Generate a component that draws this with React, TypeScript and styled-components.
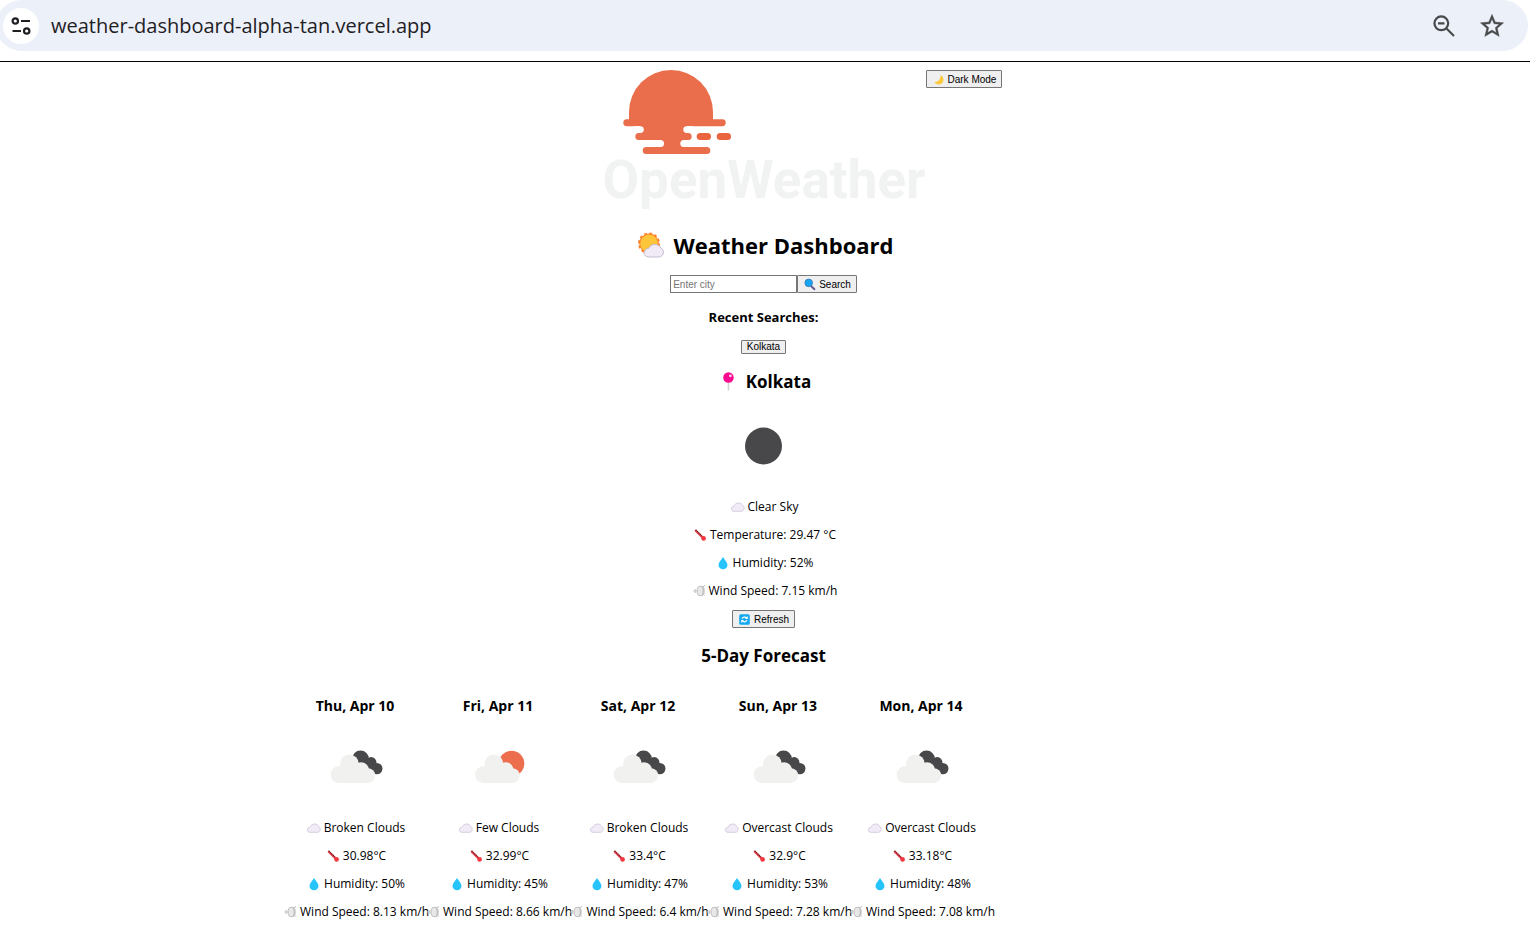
import React from "react";
import styled, { createGlobalStyle } from "styled-components";

const GlobalStyle = createGlobalStyle`
  *, *::before, *::after { box-sizing: border-box; }
  body {
    margin: 0;
    background: #fff;
    color: #000;
    font-family: "Open Sans", "Noto Sans", sans-serif;
    font-size: 12px;
    line-height: 16px;
    overflow-x: hidden;
  }
  h1, h2, h3, p { margin: 0; }
`;

const BrowserBar = styled.header`
  padding-bottom: 10px;
  border-bottom: 1px solid #000;
`;

const AddressBar = styled.div`
  display: flex;
  align-items: center;
  height: 51px;
  margin: 0 2px 0 -4px;
  padding: 0 18px 0 7px;
  border-radius: 26px;
  background: #ecf0f9;
`;

const IconButton = styled.button<{ $filled?: boolean }>`
  display: grid;
  place-items: center;
  flex: none;
  width: 36px;
  height: 36px;
  padding: 0;
  border: 0;
  border-radius: 50%;
  background: ${(p) => (p.$filled ? "#fff" : "transparent")};
`;

const Url = styled.input`
  flex: 1;
  min-width: 0;
  margin-left: 12px;
  padding: 0;
  border: 0;
  outline: 0;
  background: transparent;
  color: #1f2024;
  font-family: "Open Sans", "Noto Sans", sans-serif;
  font-size: 20px;
  line-height: 28px;
`;

const BarActions = styled.div`
  display: flex;
  gap: 12px;
`;

const Page = styled.main`
  display: flex;
  flex-direction: column;
  align-items: center;
  padding: 8px 3px 16px 0;
`;

const TopRow = styled.div`
  display: grid;
  grid-template-columns: 1fr auto 1fr;
  align-items: start;
  width: 100%;
`;

const Logo = styled.svg`
  grid-column: 2;
  display: block;
  width: 324px;
  height: 140px;
`;

const Button = styled.button<{ $compact?: boolean }>`
  display: inline-flex;
  align-items: center;
  justify-self: start;
  gap: 3px;
  height: ${(p) => (p.$compact ? 14 : 18)}px;
  padding: ${(p) => (p.$compact ? "0 5px" : "1px 5px 0")};
  border: 1px solid #767676;
  border-radius: 1px;
  background: #efefef;
  color: #000;
  font-family: "Liberation Sans", Arial, sans-serif;
  font-size: 10px;
  line-height: 12px;
  white-space: nowrap;
`;

const Title = styled.h1`
  display: flex;
  align-items: center;
  gap: 8px;
  margin-top: 19px;
  font-size: 22px;
  line-height: 32px;
`;

const SearchForm = styled.form`
  display: flex;
  margin-top: 14px;
`;

const CityInput = styled.input`
  width: 127px;
  height: 18px;
  padding: 0 2px;
  border: 1px solid #767676;
  border-radius: 0;
  background: #fff;
  font-family: "Liberation Sans", Arial, sans-serif;
  font-size: 10px;
  &::placeholder { color: #757575; }
`;

const SmallHeading = styled.h3`
  margin: 15px 0 14px;
  font-size: 13px;
  line-height: 18px;
`;

const SectionHeading = styled.h2`
  display: flex;
  align-items: center;
  gap: 6px;
  margin-top: 16px;
  font-size: 17px;
  line-height: 24px;
`;

const WeatherIcon = styled.svg`
  display: block;
  width: 75px;
  height: 75px;
  margin: 15px 0;
`;

const Facts = styled.div`
  display: flex;
  flex-direction: column;
  align-items: center;
  gap: 12px;
`;

const Fact = styled.p`
  display: flex;
  align-items: center;
  gap: 3px;
  white-space: nowrap;
`;

const RefreshSlot = styled.div`
  display: flex;
  margin-top: 11px;
`;

const Forecast = styled.section`
  display: grid;
  grid-template-columns: 143px 143px 137px 143px 143px;
  width: 100%;
  max-width: 960px;
  margin-top: 14px;
`;

const Day = styled.article`
  display: flex;
  flex-direction: column;
  align-items: center;
`;

const DayHeading = styled.h3`
  margin-top: 15px;
  font-size: 14px;
  line-height: 18px;
`;

const Glyph = styled.svg<{ $size: number }>`
  flex: none;
  width: ${(p) => p.$size}px;
  height: ${(p) => p.$size}px;
`;

type Kind = "cloud" | "thermo" | "drop" | "wind" | "pin" | "partly" | "moon" | "lens" | "refresh";

const drawings: Record<Kind, React.ReactNode> = {
  cloud: (
    <path
      d="M5 12.300C3.400 12.300 2.400 11.300 2.400 9.900c0-1.500 1-2.500 2.600-2.600C5.800 5.100 7.600 4 9.700 4c2.100 0 3.500 1 4.100 2.600.9.600 1.400 1.500 1.400 2.500 0 1.900-1.200 3.200-3.100 3.200z"
      fill="#f1ebf7"
      stroke="#cdc3d6"
      strokeWidth=".8"
    />
  ),
  thermo: (
    <>
      <path d="M4.800 3.800l7 7" stroke="#ee3f45" strokeWidth="2.200" strokeLinecap="round" />
      <path d="M4.600 2.800l6.400 6.300" stroke="#6b2430" strokeWidth="1.300" strokeDasharray="1.300 .7" />
      <circle cx="12.600" cy="11.400" r="2.300" fill="#f5383f" />
    </>
  ),
  drop: <path d="M9 2c1.500 2.500 4.500 5.200 4.500 8a4.500 4.300 0 0 1-9 0C4.500 7.200 7.500 4.500 9 2z" fill="#27c4fc" />,
  wind: (
    <>
      <path d="M3 8h5M5.300 6v4" stroke="#c9c9c9" strokeWidth="1.200" />
      <path d="M8.500 3.500l3.600-.3 2 2.600v4.400l-2 2.600-3.600-.4-1.300-2.500V6z" fill="#e8e8e8" stroke="#c2c2c2" strokeWidth="1" />
      <path d="M12.300 3.500c1.300 2.600 1.300 6.400 0 9M13 4l2-1.800M13.500 11.500l1.300.8" stroke="#b0b0b0" fill="none" strokeWidth=".9" />
    </>
  ),
  pin: (
    <>
      <path d="M8.300 7v6.700" stroke="#cfd0d4" strokeWidth="1" />
      <circle cx="8.300" cy="5" r="3.500" fill="#f70a8d" />
      <circle cx="9.600" cy="3.900" r=".9" fill="#ffd6ee" />
    </>
  ),
  partly: (
    <>
      <circle cx="7.500" cy="7.200" r="4.900" fill="#ff822d" stroke="#ff822d" strokeWidth="1.200" strokeDasharray="1.400 1.166" />
      <circle cx="7.500" cy="7.200" r="4.400" fill="#fcc53a" />
      <path
        d="M7.300 14C6 14 5.100 13.100 5.100 11.900c0-1.300.9-2.100 2.200-2.200.6-1.300 1.700-2 3.100-2 1.500 0 2.500.7 3 1.800.8.400 1.300 1.200 1.300 2.100 0 1.400-1 2.400-2.500 2.400z"
        fill="#f1ebf7"
        stroke="#c3bad0"
        strokeWidth=".5"
      />
    </>
  ),
  moon: <path d="M10.500 2.500c5.500 2.500 4.500 11.500-2 11.500-2.600 0-4.800-1.200-5.500-3 4.500.6 8-3.500 7.500-8.500z" fill="#fbc93a" />,
  lens: (
    <>
      <path d="M10.500 10.500l3.600 3.300" stroke="#635994" strokeWidth="2.400" strokeLinecap="round" />
      <circle cx="7" cy="6" r="4.700" fill="#15a5f2" stroke="#3c6fae" strokeWidth=".9" />
    </>
  ),
  refresh: (
    <>
      <rect x="1.500" y="1.500" width="13" height="13" rx="2" fill="#14a8ee" />
      <path d="M11 6.300A3.600 3.200 0 0 0 5 7M5 9.700a3.600 3.200 0 0 0 6-.7" stroke="#fff" strokeWidth="1.500" fill="none" />
      <path d="M12 3.800v3.700H8.500zM4 12.200V8.500h3.500z" fill="#fff" />
    </>
  ),
};

const Emoji = ({ kind, size = 16 }: { kind: Kind; size?: number }) => (
  <Glyph $size={size} viewBox="0 0 16 16" fill="none" aria-hidden="true">
    {drawings[kind]}
  </Glyph>
);

const CloudShape = ({ dx = 0 }: { dx?: number }) => (
  <g fill="#f1f1f0" transform={`translate(${dx} 0)`}>
    <circle cx="20.900" cy="44.600" r="8.400" />
    <circle cx="31.400" cy="34" r="9.400" />
    <circle cx="43" cy="40.500" r="8.300" />
    <circle cx="49.800" cy="45.600" r="7.400" />
    <path d="M20.900 36h10l14 4 5 6v7h-29z" />
  </g>
);

const SkyIcon = ({ sky }: { sky: "clear" | "few" | "broken" }) => (
  <WeatherIcon viewBox="0 0 75 75" role="img" aria-label={sky}>
    {sky === "clear" && <circle cx="37.500" cy="37" r="18.500" fill="#48484a" />}
    {sky === "few" && (
      <>
        <circle cx="50.500" cy="33.500" r="12.800" fill="#ec6e4c" />
        <CloudShape dx={1.5} />
      </>
    )}
    {sky === "broken" && (
      <>
        <g fill="#48484a">
          <circle cx="42.500" cy="29" r="8.400" />
          <circle cx="53.200" cy="32.400" r="5.300" />
          <circle cx="58.800" cy="38.600" r="5.700" />
          <path d="M43 32l8-4 7 8 0 8-8-2z" />
        </g>
        <CloudShape />
      </>
    )}
  </WeatherIcon>
);

const OpenWeatherLogo = () => (
  <Logo viewBox="0 0 324 140" role="img" aria-label="OpenWeather">
    <g fill="#ea6e4b">
      <path d="M27 50V42a42 42 0 0 1 84 0v8z" />
      <rect x="21.300" y="49.300" width="102.400" height="6.900" rx="3.400" />
      <rect x="38" y="55" width="47" height="9" />
      <rect x="33.300" y="63" width="56.400" height="7" rx="3.500" />
      <rect x="58" y="69" width="23" height="9" />
      <rect x="40.700" y="77" width="67.600" height="7" rx="3.500" />
    </g>
    <g fill="#e9643f">
      <rect x="94.700" y="63" width="14.300" height="7" rx="3.500" />
      <rect x="114.700" y="63" width="14.300" height="7" rx="3.500" />
    </g>
    <g fill="#fff">
      <rect x="30" y="56.200" width="11.800" height="6.800" rx="3.400" />
      <rect x="81.300" y="56.200" width="12" height="6.800" rx="3.400" />
      <rect x="50" y="70" width="12" height="7" rx="3.500" />
      <rect x="78.300" y="70" width="12" height="7" rx="3.500" />
    </g>
    <text
      x="162"
      y="128"
      textAnchor="middle"
      fill="#f1f2f2"
      fontFamily="Roboto, sans-serif"
      fontWeight="700"
      fontSize="53"
    >
      OpenWeather
    </text>
  </Logo>
);

const days = [
  { date: "Thu, Apr 10", sky: "broken", text: "Broken Clouds", temp: "30.98", humidity: 50, wind: "8.13" },
  { date: "Fri, Apr 11", sky: "few", text: "Few Clouds", temp: "32.99", humidity: 45, wind: "8.66" },
  { date: "Sat, Apr 12", sky: "broken", text: "Broken Clouds", temp: "33.4", humidity: 47, wind: "6.4" },
  { date: "Sun, Apr 13", sky: "broken", text: "Overcast Clouds", temp: "32.9", humidity: 53, wind: "7.28" },
  { date: "Mon, Apr 14", sky: "broken", text: "Overcast Clouds", temp: "33.18", humidity: 48, wind: "7.08" },
] as const;

export default function App() {
  return (
    <>
      <GlobalStyle />
      <BrowserBar>
        <AddressBar>
          <IconButton $filled aria-label="View site information">
            <svg width="20" height="20" viewBox="0 0 20 20" fill="none" stroke="#1f2024" strokeWidth="2.200">
              <circle cx="4.300" cy="5" r="2.700" />
              <path d="M10 5h9M1.500 15h8.500" />
              <circle cx="15.700" cy="15" r="2.700" />
            </svg>
          </IconButton>
          <Url type="text" aria-label="Address" defaultValue="weather-dashboard-alpha-tan.vercel.app" />
          <BarActions>
            <IconButton aria-label="Zoom">
              <svg width="24" height="24" viewBox="0 0 24 24" fill="none" stroke="#48494b" strokeWidth="2.200">
                <circle cx="9.300" cy="9.300" r="6.900" />
                <path d="M14 14l8 8M6 9.300h6.500" />
              </svg>
            </IconButton>
            <IconButton aria-label="Bookmark this tab">
              <svg width="28" height="28" viewBox="0 0 24 24" fill="#48494b" stroke="#48494b" strokeWidth=".3">
                <path d="M22 9.240l-7.190-.62L12 2 9.190 8.630 2 9.240l5.460 4.730L5.820 21 12 17.270 18.180 21l-1.630-7.030zM12 15.400l-3.760 2.270 1-4.280-3.320-2.880 4.380-.38L12 6.100l1.710 4.040 4.380.38-3.320 2.880 1 4.280z" />
              </svg>
            </IconButton>
          </BarActions>
        </AddressBar>
      </BrowserBar>

      <Page>
        <TopRow>
          <OpenWeatherLogo />
          <Button type="button">
            <Emoji kind="moon" size={13} />
            Dark Mode
          </Button>
        </TopRow>

        <Title>
          <Emoji kind="partly" size={32} />
          Weather Dashboard
        </Title>

        <SearchForm onSubmit={(e) => e.preventDefault()}>
          <CityInput type="text" placeholder="Enter city" aria-label="City" />
          <Button type="submit">
            <Emoji kind="lens" size={13} />
            Search
          </Button>
        </SearchForm>

        <SmallHeading>Recent Searches:</SmallHeading>
        <Button type="button" $compact>
          Kolkata
        </Button>

        <SectionHeading>
          <Emoji kind="pin" size={24} />
          Kolkata
        </SectionHeading>
        <SkyIcon sky="clear" />
        <Facts>
          <Fact><Emoji kind="cloud" />Clear Sky</Fact>
          <Fact><Emoji kind="thermo" />Temperature: 29.47 °C</Fact>
          <Fact><Emoji kind="drop" />Humidity: 52%</Fact>
          <Fact><Emoji kind="wind" />Wind Speed: 7.15 km/h</Fact>
        </Facts>
        <RefreshSlot>
          <Button type="button">
            <Emoji kind="refresh" size={13} />
            Refresh
          </Button>
        </RefreshSlot>

        <SectionHeading>5-Day Forecast</SectionHeading>
        <Forecast>
          {days.map((d) => (
            <Day key={d.date}>
              <DayHeading>{d.date}</DayHeading>
              <SkyIcon sky={d.sky} />
              <Facts>
                <Fact><Emoji kind="cloud" />{d.text}</Fact>
                <Fact><Emoji kind="thermo" />{d.temp}°C</Fact>
                <Fact><Emoji kind="drop" />Humidity: {d.humidity}%</Fact>
                <Fact><Emoji kind="wind" />Wind Speed: {d.wind} km/h</Fact>
              </Facts>
            </Day>
          ))}
        </Forecast>
      </Page>
    </>
  );
}
